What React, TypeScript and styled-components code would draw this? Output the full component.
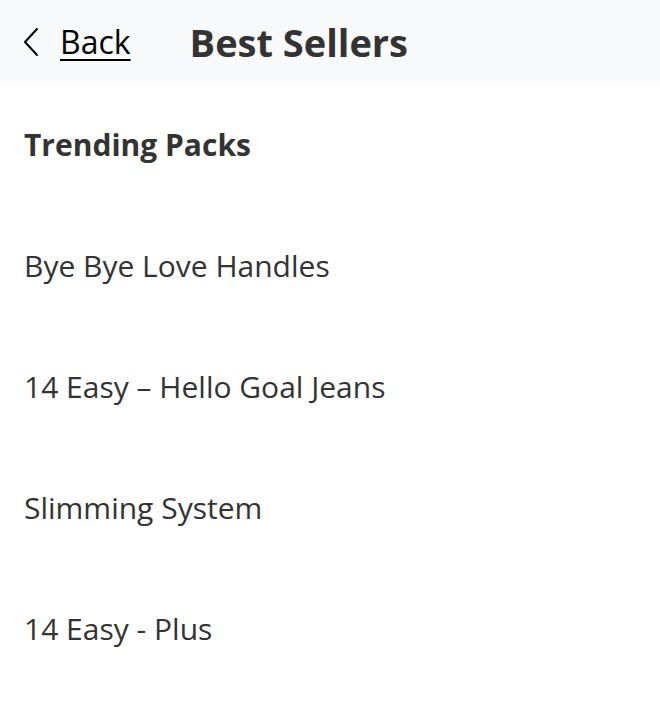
import React from "react";
import styled, { createGlobalStyle } from "styled-components";

const Global = createGlobalStyle`
  html, body { margin: 0; padding: 0; background: #ffffff; }
  body { font-family: "Open Sans", "Liberation Sans", sans-serif; color: #333333; }
  * { box-sizing: border-box; }
`;

const Page = styled.div`
  width: 660px;
  min-height: 712px;
  background: #ffffff;
`;

const Header = styled.header`
  height: 83px;
  background: #f8f9fb;
  display: flex;
  align-items: center;
  padding-left: 22px;
`;

const BackLink = styled.a`
  display: flex;
  align-items: center;
  gap: 20px;
  color: #000000;
  font-size: 32px;
  font-weight: 400;
  text-decoration: none;
  cursor: pointer;
`;

const BackText = styled.span`
  text-decoration: underline;
  text-decoration-thickness: 2px;
  text-underline-offset: 5px;
`;

const Title = styled.h1`
  margin: 0 0 0 59px;
  font-size: 38px;
  font-weight: 700;
  color: #333333;
`;

const List = styled.ul`
  list-style: none;
  margin: 0;
  padding: 0;
`;

const Row = styled.li<{ $heading?: boolean }>`
  height: 121px;
  display: flex;
  align-items: center;
  padding: 2px 0 0 24px;
  font-size: 30px;
  font-weight: ${(p) => (p.$heading ? 700 : 400)};
  color: #333333;
`;

const Chevron = () => (
  <svg width="18" height="30" viewBox="0 0 18 30" fill="none">
    <path d="M15 2 L3 15 L15 28" stroke="#000" strokeWidth="2" strokeLinecap="round" strokeLinejoin="round" />
  </svg>
);

const items = [
  "Bye Bye Love Handles",
  "14 Easy – Hello Goal Jeans",
  "Slimming System",
  "14 Easy - Plus",
];

export default function App() {
  return (
    <Page>
      <Global />
      <Header>
        <BackLink>
          <Chevron />
          <BackText>Back</BackText>
        </BackLink>
        <Title>Best Sellers</Title>
      </Header>
      <List>
        <Row $heading>Trending Packs</Row>
        {items.map((t) => (
          <Row key={t}>{t}</Row>
        ))}
      </List>
    </Page>
  );
}
